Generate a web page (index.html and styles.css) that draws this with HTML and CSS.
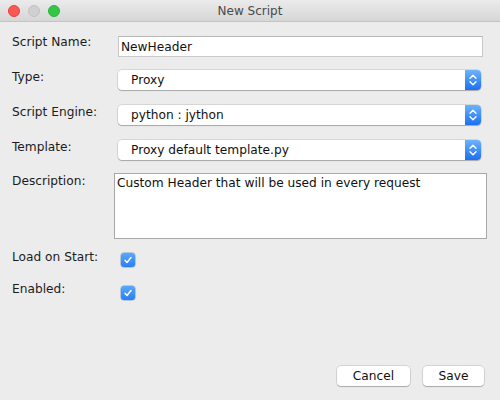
FILE: index.html
```html
<!DOCTYPE html>
<html>
<head>
<meta charset="utf-8">
<link rel="stylesheet" href="styles.css">
</head>
<body>
<div class="window">
  <div class="titlebar">
    <div class="lights">
      <span class="light red"></span>
      <span class="light gray"></span>
      <span class="light green"></span>
    </div>
    <div class="title">New Script</div>
  </div>
  <div class="form">
    <div class="row r1">
      <div class="label l1">Script Name:</div>
      <div class="textfield">NewHeader</div>
    </div>
    <div class="row r2">
      <div class="label">Type:</div>
      <div class="combo"><span class="combo-text">Proxy</span><span class="stepper"><svg width="16" height="20" viewBox="0 0 16 20"><path d="M5 8.2 L8 5.2 L11 8.2 M5 11.8 L8 14.8 L11 11.8" fill="none" stroke="#fff" stroke-width="1.4" stroke-linecap="round" stroke-linejoin="round"/></svg></span></div>
    </div>
    <div class="row r3">
      <div class="label">Script Engine:</div>
      <div class="combo"><span class="combo-text">python : jython</span><span class="stepper"><svg width="16" height="20" viewBox="0 0 16 20"><path d="M5 8.2 L8 5.2 L11 8.2 M5 11.8 L8 14.8 L11 11.8" fill="none" stroke="#fff" stroke-width="1.4" stroke-linecap="round" stroke-linejoin="round"/></svg></span></div>
    </div>
    <div class="row r4">
      <div class="label">Template:</div>
      <div class="combo"><span class="combo-text">Proxy default template.py</span><span class="stepper"><svg width="16" height="20" viewBox="0 0 16 20"><path d="M5 8.2 L8 5.2 L11 8.2 M5 11.8 L8 14.8 L11 11.8" fill="none" stroke="#fff" stroke-width="1.4" stroke-linecap="round" stroke-linejoin="round"/></svg></span></div>
    </div>
    <div class="row r5">
      <div class="label l5">Description:</div>
      <div class="textarea">Custom Header that will be used in every request</div>
    </div>
    <div class="row r6">
      <div class="label">Load on Start:</div>
      <span class="check c6"><svg width="14" height="14" viewBox="0 0 14 14"><path d="M4 7.3 L6 9.4 L10 4.6" fill="none" stroke="#fff" stroke-width="1.5" stroke-linecap="round" stroke-linejoin="round"/></svg></span>
    </div>
    <div class="row r7">
      <div class="label">Enabled:</div>
      <span class="check c7"><svg width="14" height="14" viewBox="0 0 14 14"><path d="M4 7.3 L6 9.4 L10 4.6" fill="none" stroke="#fff" stroke-width="1.5" stroke-linecap="round" stroke-linejoin="round"/></svg></span>
    </div>
    <div class="buttons">
      <div class="btn cancel">Cancel</div>
      <div class="btn save">Save</div>
    </div>
  </div>
</div>
</body>
</html>
```
FILE: styles.css
```css
html, body {
  margin: 0;
  padding: 0;
}
body {
  width: 500px;
  height: 400px;
  overflow: hidden;
  background: #ececec;
  font-family: "DejaVu Sans", sans-serif;
  font-size: 12.2px;
  color: #1c1c1c;
}
.window {
  width: 500px;
  height: 400px;
  display: flex;
  flex-direction: column;
}
.titlebar {
  height: 21px;
  border-bottom: 1px solid #c4c4c4;
  background: linear-gradient(#ebebeb, #d6d6d6);
  display: flex;
  align-items: center;
  position: relative;
}
.lights {
  display: flex;
  gap: 8px;
  padding-left: 8px;
  padding-top: 1px;
}
.light {
  width: 12px;
  height: 12px;
  box-sizing: border-box;
  border-radius: 50%;
  display: block;
}
.light.red { background: #fc5753; border: 1px solid #e5443f; }
.light.gray { background: #d0d0d0; border: 1px solid #c2c2c2; }
.light.green { background: #33c748; border: 1px solid #2bb33e; }
.title {
  position: absolute;
  left: 0;
  right: 0;
  top: 0;
  line-height: 22px;
  text-align: center;
  color: #4a4a4a;
  font-size: 12px;
}
.form {
  flex: 1;
  display: flex;
  flex-direction: column;
  padding: 0 13px 0 12px;
}
.row {
  display: flex;
  align-items: flex-start;
}
.label {
  width: 102px;
  flex: none;
  line-height: 15px;
}
.l1 { margin-top: -1px; }
.l5 { margin-top: 1px; }
.r1 { margin-top: 14px; }
.r2 { margin-top: 13px; }
.r3 { margin-top: 15px; }
.r4 { margin-top: 15px; }
.r5 { margin-top: 13px; }
.r6 { margin-top: 11px; }
.r7 { margin-top: 15px; }
.textfield {
  margin-left: 4px;
  margin-right: 4px;
  flex: 1;
  height: 19px;
  background: #fff;
  border: 1px solid #c8c8c8;
  border-top-color: #b8b8b8;
  line-height: 20px;
  padding-left: 2px;
  color: #111;
}
.combo {
  margin-left: 4px;
  margin-right: 6px;
  flex: 1;
  height: 20px;
  box-sizing: border-box;
  background: #fff;
  border-radius: 4px;
  box-shadow: 0 0 0 0.5px rgba(0,0,0,0.18), 0 1px 1px rgba(0,0,0,0.22);
  display: flex;
  align-items: center;
  justify-content: space-between;
}
.combo-text {
  padding-left: 13px;
  line-height: 20px;
  color: #111;
}
.stepper {
  width: 16px;
  height: 20px;
  border-radius: 0 4px 4px 0;
  background: linear-gradient(#6cb3fa, #1d6ff2);
  display: flex;
}
.textarea {
  flex: 1;
  background: #fff;
  border: 1px solid #a8a8a8;
  padding: 2px 2px 0 2px;
  box-sizing: border-box;
  height: 66px;
  line-height: 15px;
  color: #111;
}
.check {
  display: block;
  width: 14px;
  height: 14px;
  border-radius: 3px;
  margin-left: 7px;
  background: linear-gradient(#5aa8fb, #2a7ef3);
  box-shadow: 0 0 0 0.5px rgba(20,80,180,0.5);
}
.check svg { display: block; }
.c6 { margin-top: 3px; }
.c7 { margin-top: 4px; }
.buttons {
  margin-top: auto;
  margin-bottom: 14px;
  display: flex;
  justify-content: flex-end;
  gap: 13px;
  padding-right: 3px;
}
.btn {
  height: 20px;
  line-height: 20px;
  text-align: center;
  background: #fff;
  border-radius: 4px;
  box-shadow: 0 0 0 0.5px rgba(0,0,0,0.2), 0 1px 1px rgba(0,0,0,0.2);
  color: #111;
}
.cancel { width: 73px; }
.save { width: 61px; }
```
